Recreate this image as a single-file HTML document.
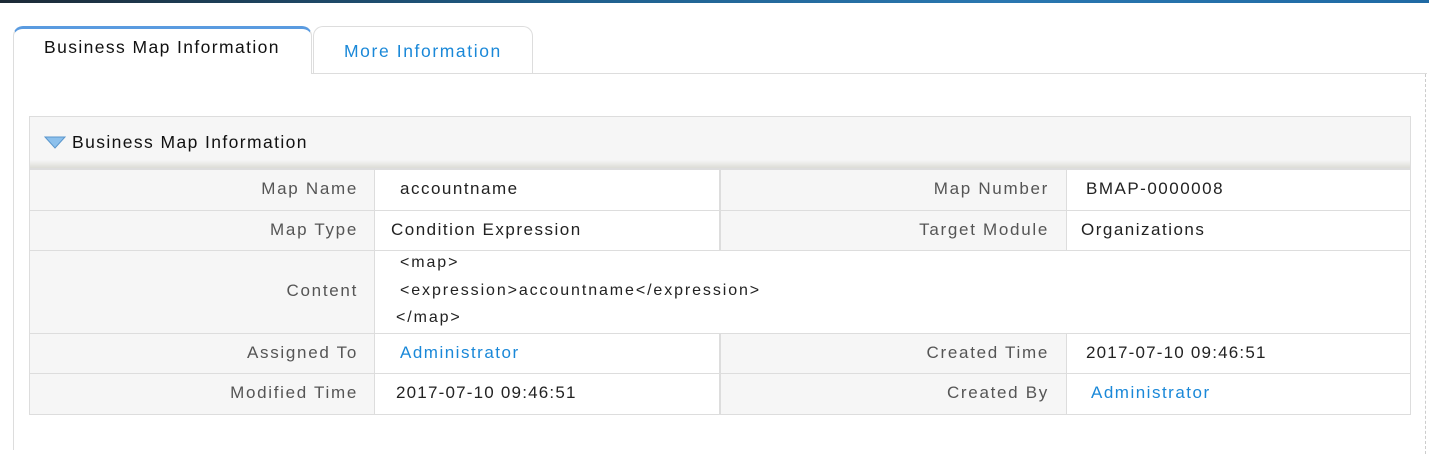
<!DOCTYPE html>
<html><head><style>
*{margin:0;padding:0;box-sizing:border-box}
body{width:1429px;height:445px;background:#fff;font-family:"Liberation Sans",sans-serif;position:relative;overflow:hidden;color:#222}
.a{position:absolute;white-space:nowrap}
.l{color:#555;text-align:right;font-size:17px;letter-spacing:1.7px}
.v{font-size:17px;letter-spacing:1.5px;color:#222}
.lnk{color:#1a88d8}
</style></head><body>
<div class="a" style="left:0;top:0;width:1429px;height:3px;background:linear-gradient(90deg,#1c2a36,#1f5f8c 40%,#2a77b0 70%,#1f6aa4)"></div>
<!-- tabs -->
<div class="a" style="left:313px;top:26px;width:220px;height:48px;border:1px solid #ddd;border-bottom:none;border-radius:10px 10px 0 0;background:#fff"></div>
<div class="a" style="left:311px;top:73px;width:1116px;height:1px;background:#ddd"></div>
<div class="a" style="left:13px;top:26px;width:299px;height:48px;border:1px solid #ddd;border-top:3px solid #5a9be0;border-radius:10px 10px 0 0;border-bottom:none;background:#fff"></div>
<div class="a" style="left:13px;top:60px;width:1px;height:390px;background:#ddd"></div>
<div class="a" style="left:1425px;top:74px;width:0;height:380px;border-left:1px dashed #ccc"></div>
<div class="a" style="left:44px;top:37px;font-size:17.5px;color:#111;letter-spacing:1.4px">Business Map Information</div>
<div class="a lnk" style="left:344px;top:41px;font-size:17.5px;letter-spacing:1.6px">More Information</div>
<!-- table -->
<div class="a" style="left:29px;top:116px;width:1382px;height:299px;border:1px solid #ddd;background:#f6f6f6"></div>
<div class="a" style="left:30px;top:160px;width:1380px;height:8px;background:linear-gradient(#f6f6f6,#dcdcd6)"></div>
<svg class="a" style="left:44px;top:136px" width="22" height="13" viewBox="0 0 22 13"><path d="M1 1 L21 1 L11 12 Z" fill="#8cc0ec" stroke="#5a96cc" stroke-width="1"/></svg>
<div class="a" style="left:72px;top:132px;font-size:17.5px;color:#111;letter-spacing:1.4px">Business Map Information</div>
<!-- grid -->
<div class="a" style="left:30px;top:168px;width:1380px;height:246px;background:#f6f6f6"></div>
<div class="a" style="left:374px;top:168px;width:346px;height:246px;background:#fff"></div>
<div class="a" style="left:374px;top:250px;width:1036px;height:83px;background:#fff"></div>
<div class="a" style="left:1066px;top:168px;width:344px;height:82px;background:#fff"></div>
<div class="a" style="left:1066px;top:333px;width:344px;height:81px;background:#fff"></div>
<div class="a" style="left:30px;top:168px;width:1380px;height:2px;background:#ddd"></div>
<div class="a" style="left:30px;top:210px;width:1380px;height:1px;background:#ddd"></div>
<div class="a" style="left:30px;top:250px;width:1380px;height:1px;background:#ddd"></div>
<div class="a" style="left:30px;top:333px;width:1380px;height:1px;background:#ddd"></div>
<div class="a" style="left:30px;top:373px;width:1380px;height:1px;background:#ddd"></div>
<div class="a" style="left:374px;top:168px;width:1px;height:246px;background:#ddd"></div>
<div class="a" style="left:719px;top:168px;width:2px;height:82px;background:#ddd"></div>
<div class="a" style="left:719px;top:333px;width:2px;height:81px;background:#ddd"></div>
<div class="a" style="left:1066px;top:168px;width:1px;height:82px;background:#ddd"></div>
<div class="a" style="left:1066px;top:333px;width:1px;height:81px;background:#ddd"></div>

<div class="a l" style="right:1071px;top:179px">Map Name</div>
<div class="a v" style="left:400px;top:179px">accountname</div>
<div class="a l" style="right:380px;top:179px">Map Number</div>
<div class="a v" style="left:1086px;top:179px">BMAP-0000008</div>

<div class="a l" style="right:1071px;top:220px">Map Type</div>
<div class="a v" style="left:391px;top:220px">Condition Expression</div>
<div class="a l" style="right:380px;top:220px">Target Module</div>
<div class="a v" style="left:1081px;top:220px">Organizations</div>

<div class="a l" style="right:1071px;top:281px">Content</div>
<div class="a v" style="left:400px;top:254px;font-size:16px;letter-spacing:1.9px">&lt;map&gt;</div>
<div class="a v" style="left:400px;top:282px;font-size:16px;letter-spacing:1.9px">&lt;expression&gt;accountname&lt;/expression&gt;</div>
<div class="a v" style="left:396px;top:309px;font-size:16px;letter-spacing:1.9px">&lt;/map&gt;</div>

<div class="a l" style="right:1071px;top:343px">Assigned To</div>
<div class="a v lnk" style="left:400px;top:343px;color:#1a88d8">Administrator</div>
<div class="a l" style="right:380px;top:343px">Created Time</div>
<div class="a v" style="left:1086px;top:343px;letter-spacing:1.2px">2017-07-10 09:46:51</div>

<div class="a l" style="right:1071px;top:383px">Modified Time</div>
<div class="a v" style="left:396px;top:383px;letter-spacing:1.2px">2017-07-10 09:46:51</div>
<div class="a l" style="right:380px;top:383px">Created By</div>
<div class="a v lnk" style="left:1091px;top:383px;color:#1a88d8">Administrator</div>
</body></html>
